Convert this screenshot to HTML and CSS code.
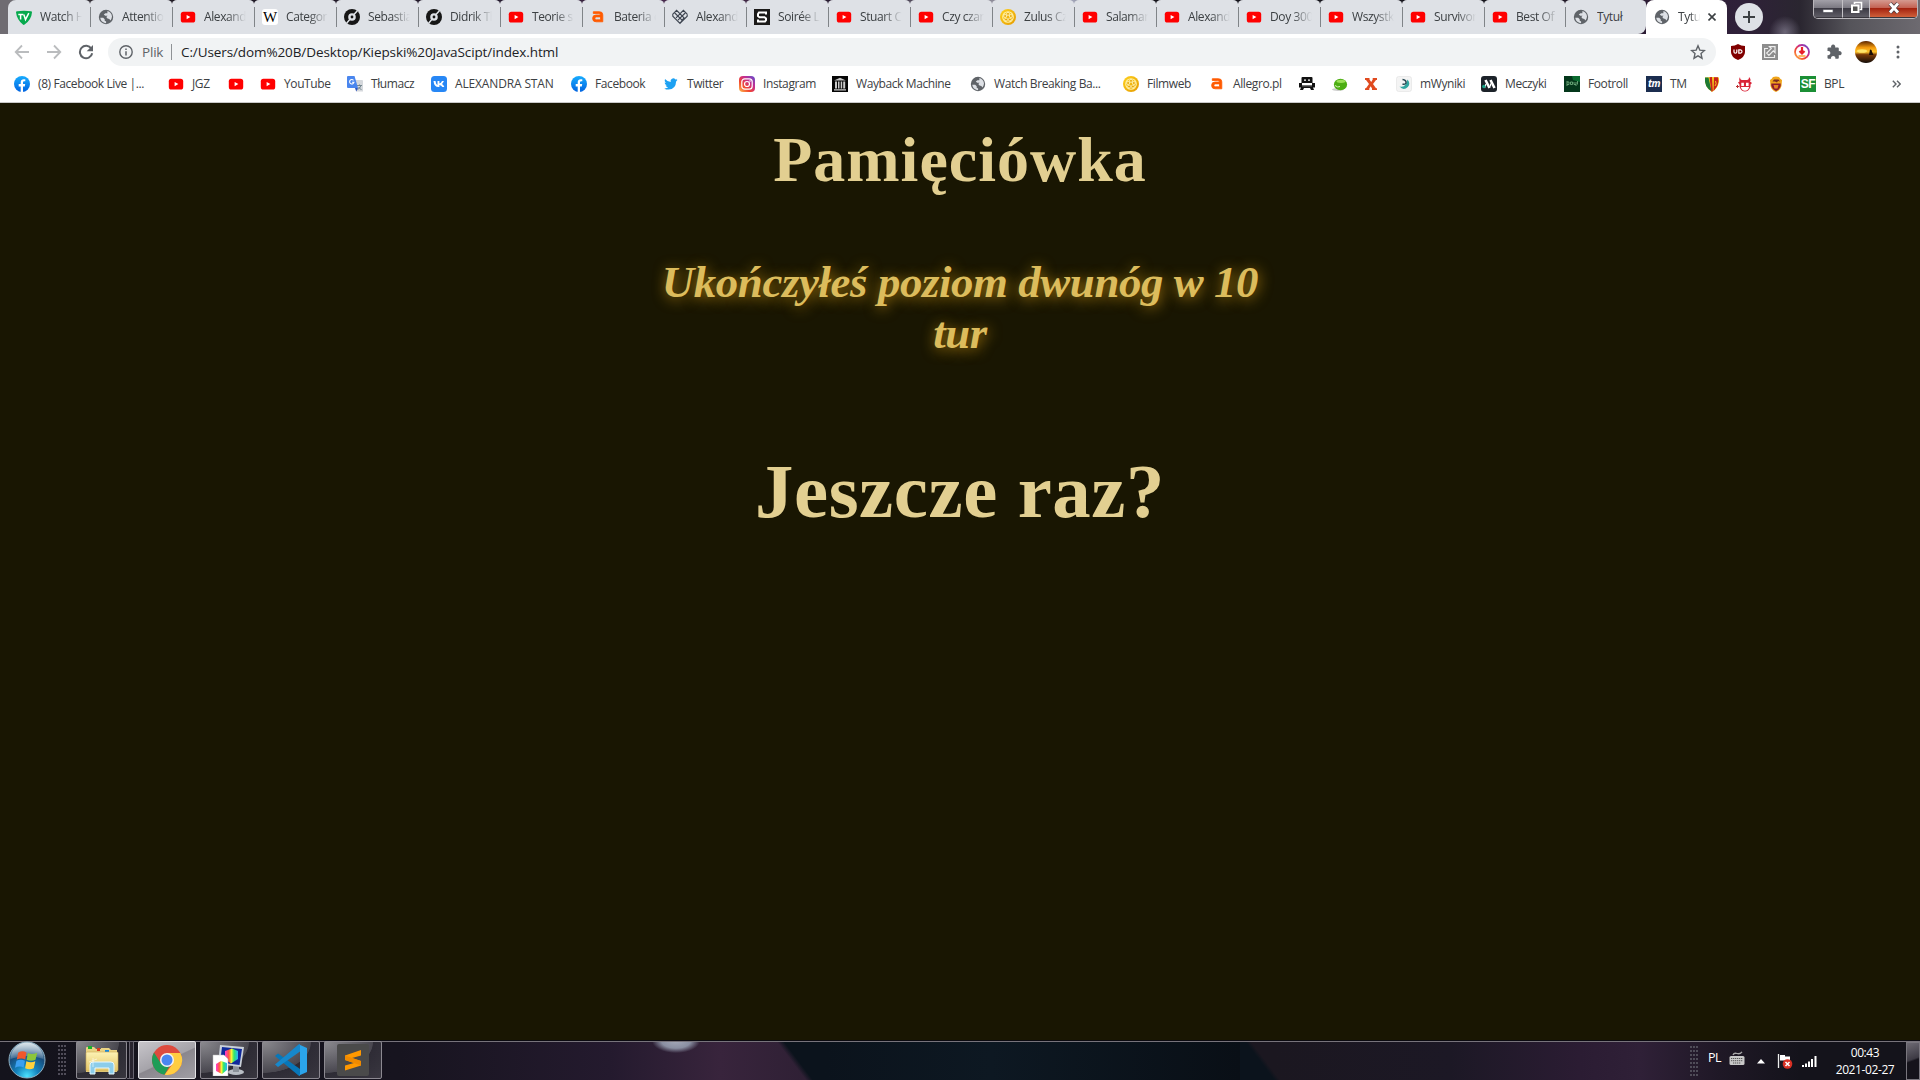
FILE: index.html
```html
<!DOCTYPE html>
<html lang="pl">
<head>
<meta charset="utf-8">
<title>Tytuł</title>
<link rel="stylesheet" href="styles.css">
</head>
<body>
<svg class="defs" width="0" height="0">
  <defs>
    <linearGradient id="gFb" x2="0" y2="1"><stop stop-color="#18acfe"/><stop offset="1" stop-color="#0163e0"/></linearGradient>
    <linearGradient id="gIg" x1="0" y1="1" x2="1" y2="0"><stop stop-color="#fec04f"/><stop offset=".35" stop-color="#f2452f"/><stop offset=".65" stop-color="#c42d91"/><stop offset="1" stop-color="#5a4fd0"/></linearGradient>
    <linearGradient id="gFw" x2="1" y2="1"><stop stop-color="#ffd21e"/><stop offset="1" stop-color="#e59a00"/></linearGradient>
    <linearGradient id="gSun" x2="0" y2="1"><stop stop-color="#5a2400"/><stop offset=".3" stop-color="#f39a0c"/><stop offset=".5" stop-color="#ffc52e"/><stop offset=".62" stop-color="#7a3a08"/><stop offset="1" stop-color="#120c08"/></linearGradient>
    <radialGradient id="gOrb" cx=".5" cy=".95" r=".9"><stop stop-color="#4be4ff"/><stop offset=".35" stop-color="#1483bd"/><stop offset=".7" stop-color="#174c7c"/><stop offset="1" stop-color="#6e93ad"/></radialGradient>
    <linearGradient id="gShine" x2="0" y2="1"><stop stop-color="#fff" stop-opacity=".75"/><stop offset="1" stop-color="#fff" stop-opacity=".15"/></linearGradient>
    <linearGradient id="gFold" x2="0" y2="1"><stop stop-color="#fdf2b4"/><stop offset="1" stop-color="#e3c566"/></linearGradient>
    <linearGradient id="gRain" x2="1" y2="0"><stop stop-color="#ff3ad4"/><stop offset=".3" stop-color="#ff5a3c"/><stop offset=".5" stop-color="#f6f53a"/><stop offset=".7" stop-color="#2fe66a"/><stop offset="1" stop-color="#2bb5ff"/></linearGradient>
    <symbol id="yt" viewBox="0 0 16 16"><rect x=".8" y="2.700" width="14.400" height="10.800" rx="2.600" fill="#f00"/><path d="M6.600 5.900v4.400L10.400 8.100z" fill="#fff"/></symbol>
    <symbol id="globe" viewBox="0 0 16 16"><circle cx="8" cy="8" r="7.200" fill="#5f6368"/><path d="M2.300 8.800h2.900l1.500 1.500v1.500l1.400.7v1.700C4.900 13.900 2.500 11.800 2.300 8.800zM9.400 1.900c2.600.6 4.400 2.700 4.600 5.500-.1 1.500-.6 2.800-1.500 4L11.300 10.100 9.500 9.400 8.300 7.900 9.600 6.700H7.200L5.800 5.500 7.400 4.200H9.400z" fill="#dee1e6"/></symbol>
    <symbol id="fb" viewBox="0 0 16 16"><circle cx="8" cy="8" r="8" fill="url(#gFb)"/><path d="M6.700 16v-5.600H4.700V8h2V6.300c0-2 1.200-3.100 3-3.100l1.600.1v2h-1c-1 0-1.300.6-1.300 1.200V8h2.200l-.4 2.400H9V16z" fill="#fff"/></symbol>
    <symbol id="disc" viewBox="0 0 16 16"><circle cx="8" cy="8" r="8" fill="#161616"/><circle cx="8" cy="8" r="2.600" fill="none" stroke="#dee1e6" stroke-width="2.400"/><path d="M10 5.600l3.400-3.900M6 10.300l-3.400 3.900" stroke="#dee1e6" stroke-width="1.500"/></symbol>
    <symbol id="allegro" viewBox="0 0 16 16"><path d="M3.300 3.400V5.200H8.800q1.700 0 1.700 1.500H6Q2.600 6.700 2.600 10.100 2.600 13.500 6.100 13.500H12.800V6.500Q12.800 3.400 9.500 3.400zM10.500 8.600v2.900H6.500Q4.900 11.500 4.900 10 4.900 8.600 6.500 8.600z" fill="#ff5a00" transform="translate(0 -.7)" stroke="#ff5a00" stroke-width=".8"/></symbol>
    <symbol id="filmweb" viewBox="0 0 16 16"><circle cx="8" cy="8" r="8" fill="url(#gFw)"/><circle cx="8" cy="8" r="5.300" fill="none" stroke="#fff0a0" stroke-width="1.100"/><g fill="#e8a806" stroke="#fff3b4" stroke-width=".9"><circle cx="8" cy="4.900" r="1.500"/><circle cx="10.900" cy="7" r="1.500"/><circle cx="9.900" cy="10.500" r="1.500"/><circle cx="6.100" cy="10.500" r="1.500"/><circle cx="5.100" cy="7" r="1.500"/></g></symbol>
    <symbol id="win" viewBox="0 0 24 24"><path d="M3 5q4-2.500 8-.3L9.800 11.500Q6 9.500 1.700 11.600z" fill="#f0572a"/><path d="M12.300 5.300q4 2 9-.3l-1.600 6.700q-4.300 2-8.500 0z" fill="#8cc63a"/><path d="M1.400 12.800Q5.500 10.700 9.500 12.700L8.300 19.300Q4.500 17.300 0 19.500z" fill="#3b9ff0"/><path d="M10.900 13.300q4.300 1.900 8.600 0L18 20q-4.200 1.800-8.300-.2z" fill="#ffd23d"/></symbol>
  </defs>
</svg>

<header class="browser">
  <div class="tabstrip">
    <div class="tabs">
      <div class="tab"><svg class="ico" viewBox="0 0 16 16"><path d="M0 3.200Q0 2.400 1 2.300 8 1.200 15 2.300q1 .1 1 .9Q15.500 10.500 8.600 15.600q-.9.600-1.700-.1Q.8 10.500 0 3.200z" fill="#06a94d"/><path d="M2.300 5.500h5M4.600 5.500v5M7.800 5.500l1.700 5 3.300-6.300" fill="none" stroke="#fff" stroke-width="1.500"/></svg><span>Watch H</span></div>
      <div class="tab"><svg class="ico"><use href="#globe"/></svg><span>Attentio</span></div>
      <div class="tab"><svg class="ico"><use href="#yt"/></svg><span>Alexand</span></div>
      <div class="tab"><i class="ico wiki">W</i><span>Categor</span></div>
      <div class="tab"><svg class="ico"><use href="#disc"/></svg><span>Sebastia</span></div>
      <div class="tab"><svg class="ico"><use href="#disc"/></svg><span>Didrik Th</span></div>
      <div class="tab"><svg class="ico"><use href="#yt"/></svg><span>Teorie s</span></div>
      <div class="tab"><svg class="ico"><use href="#allegro"/></svg><span>Bateria d</span></div>
      <div class="tab"><svg class="ico" viewBox="0 0 16 16"><g fill="none" stroke="#3d4450" stroke-width="1.100"><path d="M.8 5.200 4.600 1.400 12 8.800 8 14.400.8 7.200zM15.200 5.200 11.400 1.400 4 8.800M15.200 5.200v2L8 14.400M2.800 4 10 11.200M13.200 4 6 11.200"/></g></svg><span>Alexand</span></div>
      <div class="tab"><svg class="ico" viewBox="0 0 16 16"><path d="M0 0h16v16H0z" fill="#1b1a19"/><path d="M12 5.500V3.500H5L4 5v2l1.500 1.300h5L12 9.500v1.700L11 12.500H4V10.500" fill="none" stroke="#fff" stroke-width="2"/></svg><span>Soirée L</span></div>
      <div class="tab"><svg class="ico"><use href="#yt"/></svg><span>Stuart C</span></div>
      <div class="tab"><svg class="ico"><use href="#yt"/></svg><span>Czy czar</span></div>
      <div class="tab"><svg class="ico"><use href="#filmweb"/></svg><span>Zulus Cz</span></div>
      <div class="tab"><svg class="ico"><use href="#yt"/></svg><span>Salaman</span></div>
      <div class="tab"><svg class="ico"><use href="#yt"/></svg><span>Alexand</span></div>
      <div class="tab"><svg class="ico"><use href="#yt"/></svg><span>Doy 300</span></div>
      <div class="tab"><svg class="ico"><use href="#yt"/></svg><span>Wszystk</span></div>
      <div class="tab"><svg class="ico"><use href="#yt"/></svg><span>Survivor</span></div>
      <div class="tab"><svg class="ico"><use href="#yt"/></svg><span>Best Of</span></div>
      <div class="tab last"><svg class="ico"><use href="#globe"/></svg><span>Tytuł</span></div>
      <div class="tab active"><svg class="ico"><use href="#globe"/></svg><span>Tytuł</span><svg class="close" viewBox="0 0 8 8"><path d="M.5.5l7 7M7.500.5l-7 7" stroke="#3c4043" stroke-width="1.600"/></svg></div>
    </div>
    <div class="newtab"><svg width="12" height="12" viewBox="0 0 12 12"><path d="M6 0v12M0 6h12" stroke="#3c4043" stroke-width="2"/></svg></div>
    <div class="winbtns">
      <div class="wb min"><svg width="12" height="10" viewBox="0 0 12 10"><path d="M1 5.500h10v3H1z" fill="#fff" stroke="#55555e" stroke-width=".7"/></svg></div>
      <div class="wb max"><svg width="13" height="13" viewBox="0 0 13 13"><path d="M4.500 3V1.500h7v7H9.500" fill="none" stroke="#fff" stroke-width="1.600"/><path d="M2 4.500h6.500V11H2z" fill="#555" stroke="#fff" stroke-width="2"/></svg></div>
      <div class="wb cls"><svg width="14" height="12" viewBox="0 0 14 12"><path d="M3 1.500l8 9M11 1.500l-8 9" stroke="#4a3c40" stroke-width="4.200"/><path d="M3 1.500l8 9M11 1.500l-8 9" stroke="#fff" stroke-width="2.800"/></svg></div>
    </div>
  </div>

  <div class="toolbar">
    <svg class="nav" viewBox="0 0 16 16"><path d="M15 8H2M8 1.500 1.700 8 8 14.500" fill="none" stroke="#babcbe" stroke-width="1.800"/></svg>
    <svg class="nav" viewBox="0 0 16 16"><path d="M1 8h13M8 1.500 14.300 8 8 14.500" fill="none" stroke="#babcbe" stroke-width="1.800"/></svg>
    <svg class="nav" viewBox="0 0 16 16"><path d="M13.300 4.600A6.200 6.200 0 1 0 14.200 9.300" fill="none" stroke="#5f6368" stroke-width="2"/><path d="M15 1v6.300H8.700z" fill="#5f6368"/></svg>
    <div class="omnibox">
      <svg class="info" viewBox="0 0 14 14"><circle cx="7" cy="7" r="6.200" fill="none" stroke="#5f6368" stroke-width="1.400"/><path d="M7 6.300v4.200M7 3.500v1.500" stroke="#5f6368" stroke-width="1.500"/></svg>
      <span class="scheme">Plik</span>
      <span class="url">C:/Users/dom%20B/Desktop/Kiepski%20JavaScipt/index.html</span>
      <svg class="star" viewBox="0 0 16 16"><path d="M8 1.800l1.800 4.300 4.700.4-3.500 3.100 1 4.600L8 11.800l-4 2.400 1-4.600L1.500 6.500l4.700-.4z" fill="none" stroke="#5f6368" stroke-width="1.400"/></svg>
    </div>
    <div class="exts">
      <svg class="ico" viewBox="0 0 16 16"><path d="M8 0Q11 2 15 2v6q0 5-7 8-7-3-7-8V2Q5 2 8 0z" fill="#800000"/><path d="M4 5.500V8q0 1.200 1.400 1.200T6.800 8V5.500" fill="none" stroke="#fff" stroke-width="1.200"/><path d="M8.800 5.800h1.700q1.500.2 1.500 1.700T10.500 9.200H8.800z" fill="none" stroke="#fff" stroke-width="1.200"/></svg>
      <svg class="ico" viewBox="0 0 16 16"><path d="M0 0h16v16H0z" fill="#8d8d8d"/><path d="M6 4.500H2.600v9h9.900V11" fill="none" stroke="#eee" stroke-width="1.200"/><path d="M7.500 2.700H13V8.500L11.300 6.900 6.900 11.300 4.700 9.100 9.200 4.600z" fill="none" stroke="#eee" stroke-width="1.200"/></svg>
      <svg class="ico" viewBox="0 0 16 16"><circle cx="8" cy="8" r="7" fill="none" stroke="url(#gIg)" stroke-width="1.800"/><path d="M8 3v6M5.500 7 8 9.500 10.500 7" fill="none" stroke="#e8202a" stroke-width="2.200"/><path d="M4.500 12h7" stroke="#fb9c20" stroke-width="1.400"/></svg>
      <svg class="ico" viewBox="0 0 16 16"><path d="M1.500 4.500q0-1 1-1H5.200a2.100 2.100 0 1 1 3.900 0h2.700q1 0 1 1v2.700a2.100 2.100 0 1 1 0 3.900v2.700q0 1-1 1H9.300a2.200 2.200 0 1 0-4.200 0H2.500q-1 0-1-1v-2.600a2.200 2.200 0 1 0 0-4.200z" fill="#5f6368"/></svg>
      <svg class="avatar" viewBox="0 0 22 22"><circle cx="11" cy="11" r="11" fill="url(#gSun)"/><ellipse cx="7" cy="10" rx="5" ry="1.800" fill="#ffe56a"/><path d="M15 8.500q2 0 2 2.200l1.500 3.300h-4.500z" fill="#1b0d04"/></svg>
      <svg class="dots" viewBox="0 0 4 14"><g fill="#5f6368"><circle cx="2" cy="2" r="1.500"/><circle cx="2" cy="7" r="1.500"/><circle cx="2" cy="12" r="1.500"/></g></svg>
    </div>
  </div>

  <nav class="bookmarks">
    <a><svg class="ico"><use href="#fb"/></svg><span>(8) Facebook Live |...</span></a>
    <a><svg class="ico"><use href="#yt"/></svg><span>JGZ</span></a>
    <a><svg class="ico"><use href="#yt"/></svg></a>
    <a><svg class="ico"><use href="#yt"/></svg><span>YouTube</span></a>
    <a><svg class="ico" viewBox="0 0 16 16"><path d="M6 4h9q1 0 1 1v10.500H9z" fill="#d5d8dc"/><path d="M10 9.500h5M12.500 8.500v1M14 9.500q-1 3-3.500 4M11.500 11l3 3" stroke="#6b7f87" fill="none" stroke-width=".9"/><path d="M1 0h6.500L11 12H1q-1 0-1-1V1q0-1 1-1z" fill="#4a86ee"/><path d="M8 12h3l-1.700 3.500z" fill="#2f56c0"/><path d="M6.500 4.300A2.200 2.200 0 1 0 7 6.200H5" fill="none" stroke="#fff" stroke-width="1.100"/></svg><span>Tłumacz</span></a>
    <a class="caps"><svg class="ico" viewBox="0 0 16 16"><rect width="16" height="16" rx="3.500" fill="#2787f5"/><path d="M2.500 5h2q.3 3 2 4V5h1.900v2.500Q10 7 11 5h1.900q-.5 1.700-1.900 2.900 1.700 1 2.300 3.100h-2Q10.500 9.500 8.400 9v2Q3 11.500 2.500 5z" fill="#fff"/></svg><span>ALEXANDRA STAN</span></a>
    <a><svg class="ico"><use href="#fb"/></svg><span>Facebook</span></a>
    <a><svg class="ico" viewBox="0 0 16 16"><path d="M14.500 3.800q-.8.400-1.600.5.900-.5 1.200-1.500-.8.500-1.700.7A2.700 2.700 0 0 0 7.700 6Q4.300 5.800 2 3.100q-1.100 2.300.9 3.800-.7 0-1.300-.4.100 2.200 2.200 2.800-.6.200-1.200.1.600 1.700 2.600 1.900-1.700 1.300-4 1.100 2 1.300 4.300 1.200 7.300-.4 7.600-8.200.8-.6 1.400-1.600z" fill="#1da1f2"/></svg><span>Twitter</span></a>
    <a><svg class="ico" viewBox="0 0 16 16"><rect width="16" height="16" rx="4" fill="url(#gIg)"/><rect x="2.800" y="2.800" width="10.400" height="10.400" rx="3" fill="none" stroke="#fff" stroke-width="1.200"/><circle cx="8" cy="8" r="2.500" fill="none" stroke="#fff" stroke-width="1.200"/><circle cx="11" cy="5" r=".8" fill="#fff"/></svg><span>Instagram</span></a>
    <a><svg class="ico" viewBox="0 0 16 16"><path d="M0 0h16v16H0z" fill="#050505"/><path d="M2 4.500 8 1.700l6 2.800zM3 5.500h2v7H3zM6 5.500h1.500v7H6zM8.700 5.500h1.500v7H8.700zM11.200 5.500h2v7h-2zM2 13.200h12v1.300H2z" fill="#c9c9c9"/></svg><span>Wayback Machine</span></a>
    <a><svg class="ico"><use href="#globe"/></svg><span>Watch Breaking Ba...</span></a>
    <a><svg class="ico"><use href="#filmweb"/></svg><span>Filmweb</span></a>
    <a><svg class="ico"><use href="#allegro"/></svg><span>Allegro.pl</span></a>
    <a><svg class="ico" viewBox="0 0 16 16"><path d="M3.500 1h9q1 0 1 1v5h-11V2q0-1 1-1zM0 7h3v2h10V7h3v4.500h-2L15 14h-3l-1-2H5l-1 2H1l1-2.500H0z" fill="#111"/><path d="M5 3.500h2v1.300H5zM9 3.500h2v1.300H9z" fill="#fff"/><path d="M3 9.800h10" stroke="#fff" stroke-width=".6"/></svg></a>
    <a><svg class="ico" viewBox="0 0 16 16"><ellipse cx="6" cy="13.500" rx="6" ry="1.500" fill="#ccc"/><ellipse cx="8.500" cy="8.500" rx="6.600" ry="5.700" fill="#4cae12"/><ellipse cx="9" cy="5.300" rx="4.500" ry="1.600" fill="#9be058"/><path d="M3 9.500q3 2.500 5 1" stroke="#d5f2b8" fill="none" stroke-width="1"/></svg></a>
    <a><svg class="ico" viewBox="0 0 16 16"><path d="M2 2h4.500v1.500l1.700 2.600 1.500-2.600V2H14v2h-1L10 8l3 4.200h1V14H9v-1.500L7.700 10.300 6.300 12.500V14H2v-1.800h1L6 8 3 4H2z" fill="#e04a1f"/></svg></a>
    <a><svg class="ico" viewBox="0 0 16 16"><rect x=".5" y=".5" width="15" height="15" rx="2" fill="#f4f4f4" stroke="#ddd" stroke-width=".5"/><path d="M11.500 3.500q3.500 4 .3 7.500-4.300 4-8.300-.5 4.500 1 6-2t2-5z" fill="#2fa6a0"/><path d="M6.500 3.500q4 .5 3.500 3.500-1 2-3.500 1" fill="none" stroke="#2b4b55" stroke-width="1.500"/></svg><span>mWyniki</span></a>
    <a><svg class="ico" viewBox="0 0 16 16"><rect width="16" height="16" rx="3" fill="#1c2229"/><path d="M4.500 4 8.500 12M9.500 4 13.500 12" stroke="#fff" stroke-width="2.600"/><path d="M5 8 3.500 12M9.500 7.500v3" stroke="#fff" stroke-width="1.200"/><circle cx="2.800" cy="10.500" r="1.700" fill="#16a085"/></svg><span>Meczyki</span></a>
    <a><svg class="ico" viewBox="0 0 16 16"><path d="M0 0h16v16H0z" fill="#04371b"/><path d="M8 0h8v6L9 4z" fill="#0b6b30"/><path d="M3 5v5M3 6h2v2.500H3M6.500 6h2v2.500h-2zM10 6v2.500h2V6M12 8.500V10M13.500 5v3.500" stroke="#6da87c" fill="none" stroke-width=".9"/></svg><span>Footroll</span></a>
    <a><i class="ico tm">tm</i><span>TM</span></a>
    <a><svg class="ico" viewBox="0 0 16 16"><path d="M1 1.500Q8 .5 15 1.500 16 11 8 16 0 11 1 1.500z" fill="#f3cf1d"/><path d="M1 1.500h3.500l3 13.800Q0 11 1 1.500z" fill="#1d7a34"/><path d="M5.500 1.200 8 1l.8 14.300-1.500.3zM10 1.200h4q1.500 7-3 12L9.500 15.200z" fill="#c8201d"/><path d="M11.500 5q1.500 3-.5 5" stroke="#f3cf1d" fill="none"/></svg></a>
    <a><svg class="ico" viewBox="0 0 16 16"><path d="M4 1q0 3 2 3h5q2 0 2-3 2.500 2.500 1 4.500L16 7l-1.500 1.500V11q-2 4.500-5.500 4.500T3.500 11V8.500L2 6.500l1.500-1Q2.500 3 4 1z" fill="#d92337"/><path d="M5.300 6.800h2.600V10H5.300zM10 6.800h2.600V10H10zM4.800 11h8.400q-1 3.700-4.200 3.700T4.800 11z" fill="#fff"/><path d="M0 10.500h3M1.500 9v3" stroke="#b33"/></svg></a>
    <a><svg class="ico" viewBox="0 0 16 16"><path d="M2 4Q4 3 5 1q3-1 6 0 1 2 3 3l-.5 6Q12.500 14 8 16 3.500 14 2.500 10z" fill="#f0a51b"/><path d="M3.300 7.500h9.400V10q-1 3.500-4.700 5-3.700-1.500-4.700-5z" fill="#8d1b2d"/><path d="M4.500 5.500 6 3.500h4.500L12 5.500l-2-.5-1 1.500-2-1z" fill="#7b2d22"/><path d="M5.500 9h5l-1 3.500h-3z" fill="#e88322"/></svg></a>
    <a><i class="ico sf">SF</i><span>BPL</span></a>
    <b class="more"><svg width="9" height="8" viewBox="0 0 9 8"><path d="M.8.800 4 4 .8 7.200M5 .8 8.200 4 5 7.200" fill="none" stroke="#5f6368" stroke-width="1.400"/></svg></b>
  </nav>
</header>

<main class="page">
  <h1>Pamięciówka</h1>
  <p class="result">Ukończyłeś poziom dwunóg w 10 tur</p>
  <p class="again">Jeszcze raz?</p>
</main>

<footer class="taskbar">
  <svg class="orb" viewBox="0 0 38 38"><circle cx="19" cy="19" r="18" fill="url(#gOrb)" stroke="#8fb0c2" stroke-width="1"/><path d="M2.500 18A16.500 16.500 0 0 1 35.500 18Q19 12 2.500 18z" fill="url(#gShine)"/><use href="#win" x="7" y="6.500" width="25" height="25"/></svg>
  <div class="grip"></div>
  <div class="task stacked"><svg width="34" height="32" viewBox="0 0 34 32"><path d="M1 4q0-1 1-1h7l2 2h5V4h8l2 2h6v22H1z" fill="#ead384"/><path d="M3 2h4v3H3z" fill="#18b02c"/><path d="M12 4h3v3h-3z" fill="#db3b1c"/><path d="M20 6h4v3h-4z" fill="#1688dc"/><path d="M2 8h30q1 0 1 1v17q0 1-1 1H2q-1 0-1-1V9q0-1 1-1z" fill="url(#gFold)" stroke="#c9aa55" stroke-width=".6"/><path d="M5 30V21q0-3 3-3h18q3 0 3 3v9h-5v-6H10v6z" fill="#8ccdea" stroke="#e5f8ff"/><path d="M8 14v9M4 18l8-3" stroke="#fff" stroke-opacity=".8" stroke-width=".7"/></svg></div>
  <div class="stack-edge"></div>
  <div class="task lit"><svg width="32" height="32" viewBox="0 0 32 32"><circle cx="16" cy="16" r="15" fill="#dd4b3e"/><path d="M3 8.500 10 19.500 16 23l-2.500 7.800A15 15 0 0 1 3 8.500z" fill="#1f9d57"/><path d="M16 9h13.300A15 15 0 0 1 13.500 30.800L22 19.500z" fill="#ffcd42"/><path d="M13.400 30.800 20 19.500 12 20z" fill="#1f9d57"/><circle cx="16" cy="16" r="7" fill="#f4f4f4"/><circle cx="16" cy="16" r="5.500" fill="#4a86f0"/></svg></div>
  <div class="task"><svg width="34" height="32" viewBox="0 0 34 32"><ellipse cx="24" cy="28" rx="8" ry="3" fill="#b9bec4"/><path d="M21 22h6v6h-6z" fill="#8b9198"/><path d="M8 1 32 3 29 23 6 20z" fill="#c9d0d8"/><path d="M10 3 30 5 27.500 21 8 18.500z" fill="#10299b"/><path d="M13 7 20 4.500 26 7v8l-7 4.500-6-4z" fill="url(#gRain)"/><path d="M1 11h11l4 4v17H1z" fill="#fff" stroke="#bbb" stroke-width=".5"/><path d="M4 20l5-3 6 2v7l-5 4-6-3z" fill="url(#gRain)"/></svg></div>
  <div class="task"><svg width="34" height="34" viewBox="0 0 34 34"><path d="M1 13 4 10.500 26 26v7L24.500 32.500z" fill="#0877b9"/><path d="M1 21.500 4 24 26 8.500V1L24.500 1.500z" fill="#1688cc"/><path d="M24.500 1.200 33 5v24l-8.500 3.800q1.500-.4 1.500-2V3q0-1.500-1.500-1.800z" fill="#2ba4ea"/></svg></div>
  <div class="task"><svg width="32" height="32" viewBox="0 0 32 32"><rect width="32" height="32" rx="2" fill="#4a4a4a"/><path d="M8 11.500 24 6v5.500L15 14l9 3v4.500L8 26.500V21.500L17 19 8 16z" fill="#ff9800"/><path d="M8 11.500 24 17v4.500L8 16z" fill="#f08a00"/></svg></div>
  <div class="tray">
    <div class="grip"></div>
    <span class="lang">PL</span>
    <svg class="kbd" viewBox="0 0 16 15"><path d="M4 4Q5 1.500 8 2.500T13 .8" fill="none" stroke="#aaa" stroke-width="1.300"/><rect x=".5" y="5" width="15" height="9" rx="1.500" fill="#c8c8c8"/><path d="M2 7.500h12M2 9.700h12M4 12h8" stroke="#555" stroke-width="1" stroke-dasharray="1.300 .7"/></svg>
    <svg class="up" viewBox="0 0 8 5"><path d="M4 0 8 4.500H0z" fill="#fff"/></svg>
    <svg class="flag" viewBox="0 0 16 16"><path d="M1.500 1v14" stroke="#eee" stroke-width="1.300"/><path d="M3 2h5v1.500h5V9H8.500V7.500H3z" fill="#fff"/><circle cx="10.500" cy="11" r="4.800" fill="#d93024"/><path d="M8.500 9l4 4M12.500 9l-4 4" stroke="#fff" stroke-width="1.500"/></svg>
    <svg class="signal" viewBox="0 0 15 12"><path d="M0 10h2v2H0zM3 8.500h2V12H3zM6 6.500h2V12H6zM9 4h2v8H9zM12.500 1h2v11h-2z" fill="#fff"/></svg>
    <div class="clock"><span>00:43</span><span>2021-02-27</span></div>
    <div class="desktop-btn"></div>
  </div>
</footer>
</body>
</html>
```
FILE: styles.css
```css
* { box-sizing: border-box; }
body {
  margin: 0;
  width: 1920px;
  height: 1080px;
  overflow: hidden;
  display: flex;
  flex-direction: column;
  background: #191602;
}
.defs { position: absolute; }
svg { display: block; flex: none; }
.ico { width: 16px; height: 16px; flex: none; }

/* Browser chrome */
.browser {
  height: 103px;
  flex: none;
  background: #fff;
  border-bottom: 1px solid #c9c9c9;
  font: 12px/16px "Open Sans", "Noto Sans", sans-serif;
  color: #3c4043;
}
.tabstrip {
  height: 34px;
  display: flex;
  padding-left: 8px;
  background:
    radial-gradient(circle at 1785px 32px, rgba(150,145,165,.6), transparent 16px),
    linear-gradient(90deg, #6f6c72 0, #6f6c72 60px, #1d1820 100px, #241a2e 500px, #47284c 660px, #3f2744 750px, #241a2e 850px, #8a8794 985px, #a6a9bd 1070px, #15141b 1140px, #15141b 1500px, #2c1c34 1640px, #2f2039 1740px, #2a2630 1800px, #55545a 1850px, #6d6a70 1920px);
}
.tabs { display: grid; grid-template-columns: repeat(18, 82px) 81px 81px 81px; }
.tab {
  position: relative;
  height: 34px;
  display: flex;
  align-items: center;
  gap: 8px;
  padding: 0 8px;
  background: #dee1e6;
  border-radius: 5px 5px 0 0 / 4px 4px 0 0;
}
.tab:first-child { border-top-left-radius: 8px; }
.tab + .tab::before {
  content: "";
  position: absolute;
  left: 0;
  top: 7px;
  width: 1px;
  height: 20px;
  background: #808488;
}
.tab span {
  width: 42px;
  flex: none;
  overflow: hidden;
  white-space: nowrap;
  letter-spacing: -.4px;
  margin-bottom: 1px;
  -webkit-mask-image: linear-gradient(90deg, #000 55%, transparent);
  mask-image: linear-gradient(90deg, #000 55%, transparent);
}
.tab.last { border-bottom-right-radius: 8px; }
.tab.last span { -webkit-mask: none; mask: none; }
.tab.active {
  background: #fff;
  border-radius: 8px 8px 0 0;
}
.tab.last::before { display: block; }
.tab.active::before { display: none; }
.tab.active span { width: 22px; }
.close { width: 8px; height: 8px; }
.wiki, .tm, .sf {
  display: flex;
  align-items: center;
  justify-content: center;
  font-style: normal;
}
.wiki { background: #fff; border-radius: 3px; color: #000; font: 15px "Liberation Serif", serif; }
.tm { background: #1b2d4f; color: #fff; font: italic bold 10px/12px "Open Sans", sans-serif; padding-bottom: 2px; letter-spacing: -.5px; }
.sf { background: #1b8f35; color: #fff; font: bold 12px "Liberation Sans", sans-serif; letter-spacing: -.5px; }
.newtab {
  width: 28px;
  height: 28px;
  margin: 3px 0 0 8px;
  border-radius: 50%;
  background: #dee1e6;
  display: flex;
  align-items: center;
  justify-content: center;
}
.winbtns {
  margin: 0 2px 0 auto;
  height: 19px;
  width: 105px;
  display: grid;
  grid-template-columns: 29px 27px 1fr;
  border: 1px solid #b9b6bb;
  border-top: 0;
  border-radius: 0 0 5px 5px;
  overflow: hidden;
}
.wb {
  display: flex;
  align-items: center;
  justify-content: center;
  padding-bottom: 2px;
  background: linear-gradient(#a2a0a8 0, #7c7a83 45%, #3c3a44 50%, #5f5d66);
  border-right: 1px solid #c3c1c6;
  border-bottom: 1px solid #38363d;
}
.wb.min { padding-top: 3px; }
.wb.cls { background: linear-gradient(#d59a90 0, #c46354 45%, #a42310 50%, #d0603a); border-right: 0; }

.toolbar { height: 36px; display: flex; align-items: center; padding-left: 14px; }
.nav { width: 16px; height: 16px; margin-right: 16px; }
.nav:nth-child(3) { margin-right: 14px; }
.omnibox {
  width: 1608px;
  height: 28px;
  border-radius: 14px;
  background: #f1f3f4;
  display: flex;
  align-items: center;
  padding: 0 10px 0 11px;
  font-size: 13.5px;
}
.info { width: 14px; height: 14px; }
.scheme {
  width: 30px;
  height: 16px;
  line-height: 16px;
  margin: 0 9px;
  border-right: 1px solid #8f9295;
  color: #5f6368;
  letter-spacing: -.2px;
}
.url { color: #202124; letter-spacing: -.1px; }
.star { width: 16px; height: 16px; margin-left: auto; }
.exts { flex: 1; display: flex; align-items: center; padding-left: 14px; gap: 16px; }
.avatar { width: 22px; height: 22px; margin-left: -3px; }
.dots { width: 4px; height: 14px; margin-left: 3px; }

.bookmarks {
  height: 32px;
  padding: 0 19px 4px 14px;
  display: grid;
  align-items: center;
  grid-template-columns: 154px 60px 32px 87px 84px 140px 92px 76px 93px 138px 153px 86px 90px 33px 31px 33px 85px 83px 82px 58px 32px 32px 32px 60px 1fr;
}
.bookmarks a { display: flex; align-items: center; gap: 8px; white-space: nowrap; letter-spacing: -.4px; }
.bookmarks span { margin-bottom: 1px; }
.bookmarks .caps { letter-spacing: -.15px; }
.more { justify-self: end; }

/* Game page */
.page {
  flex: 1;
  text-align: center;
  font-family: "Liberation Serif", "Times New Roman", serif;
  font-weight: bold;
  color: #e2cf91;
}
.page h1 { margin: 20px 0 0; font-size: 64px; line-height: 74px; letter-spacing: 1px; }
.result {
  width: 640px;
  margin: 60px auto 0;
  font-size: 44.8px;
  line-height: 51px;
  letter-spacing: -.38px;
  font-style: italic;
  color: #dcbc5c;
  text-shadow: 1px 2px 14px #a87b10;
}
.again { margin: 89px 0 0; font-size: 76.8px; line-height: 88px; letter-spacing: .6px; }

/* Windows taskbar */
.taskbar {
  height: 40px;
  flex: none;
  display: flex;
  padding-left: 8px;
  border-top: 1px solid #0b0a10;
  box-shadow: inset 0 1px #77737b;
  background:
    radial-gradient(ellipse 24px 12px at 676px 0, #a4a8b8 0, #8a8fa2 60%, transparent),
    linear-gradient(53deg, #0b131c 50%, transparent 58%) 1240px 0 / 40px 40px no-repeat,
    linear-gradient(53deg, transparent 46%, #0b131c 54%) 765px 0 / 60px 40px no-repeat,
    linear-gradient(90deg, #0b131c, #0d1822 40%, #090f16) 825px 0 / 415px 40px no-repeat,
    linear-gradient(90deg, #14131c 0, #17141f 400px, #241a2e 610px, #38243c 720px, #2d1f33 825px, #1b1720 1240px, #1b1720 1275px, #1c1825 1450px, #2b1c33 1580px, #2f2037 1640px, #1f1826 1720px, #14131b 1800px, #14131b 1920px);
  color: #fff;
  font-family: "Open Sans", "Noto Sans", sans-serif;
}
.orb { width: 38px; height: 38px; }
.grip {
  width: 8px;
  height: 30px;
  margin: 4px 10px 0 12px;
  background: radial-gradient(circle at 1px 1px, #4f4c58 .8px, transparent 1px) 0 0 / 3px 4px;
}
.task {
  width: 58px;
  height: 38px;
  margin-right: 4px;
  border: 1px solid #8c8991;
  border-radius: 2px;
  display: flex;
  align-items: center;
  justify-content: center;
  background: radial-gradient(ellipse at 0 0, rgba(255,255,255,.5), rgba(255,255,255,.22) 60%, rgba(255,255,255,.1) 61%, rgba(255,255,255,.15));
}
.task.stacked { width: 51px; margin-right: 0; }
.stack-edge { width: 7px; height: 38px; margin-right: 4px; border: solid #66636e; border-width: 1px 1px 1px 0; box-shadow: inset -3px 0 #28242f, inset -4px 0 #66636e; }
.task.lit { border-color: #e4e3e6; background: linear-gradient(155deg, #c7c5ca, #a5a3a9 50%, #8a878e 52%, #a09ea4); }
.tray { margin-left: auto; display: flex; align-items: center; }
.tray .grip { margin: 0 10px 0 0; }
.lang { width: 21px; font-size: 12.5px; letter-spacing: -.5px; margin-top: -6px; }
.kbd { width: 16px; height: 15px; margin-top: -5px; }
.up { width: 8px; height: 5px; margin: 1px 12px 0; }
.flag { width: 16px; height: 16px; }
.signal { width: 15px; height: 12px; margin: 0 18px 0 9px; }
.clock { width: 60px; display: grid; text-align: center; font-size: 12px; line-height: 17px; letter-spacing: -.4px; white-space: nowrap; }
.desktop-btn {
  width: 14px;
  height: 38px;
  margin-left: 11px;
  border: 1px solid #79767e;
  background: linear-gradient(160deg, #6d6a73 0, #3d3a44 45%, #15131b 50%);
}
```
